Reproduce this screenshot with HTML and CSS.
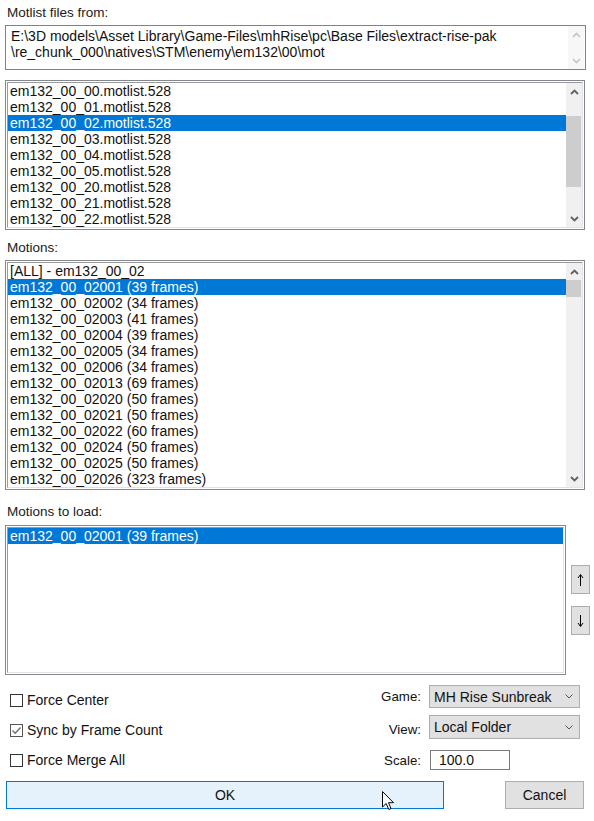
FILE: index.html
```html
<!DOCTYPE html>
<html>
<head>
<meta charset="utf-8">
<link rel="stylesheet" href="styles.css">
</head>
<body>
<div class="dialog">
  <div class="label lbl-first">Motlist files from:</div>
  <div class="pathbox">
    <div class="pathtext">E:\3D models\Asset Library\Game-Files\mhRise\pc\Base Files\extract-rise-pak<br>\re_chunk_000\natives\STM\enemy\em132\00\mot</div>
    <div class="vscroll vscroll-disabled">
      <div class="sarrow"><svg width="9" height="6" viewBox="0 0 9 6"><polyline points="1,5 4.5,1.5 8,5" fill="none" stroke="#c4c4c4" stroke-width="1.6"/></svg></div>
      <div class="strack"></div>
      <div class="sarrow"><svg width="9" height="6" viewBox="0 0 9 6"><polyline points="1,1 4.5,4.5 8,1" fill="none" stroke="#c4c4c4" stroke-width="1.6"/></svg></div>
    </div>
  </div>

  <div class="listbox list-files">
    <div class="listinner">
      <div class="rows">
        <div class="row">em132_00_00.motlist.528</div>
        <div class="row">em132_00_01.motlist.528</div>
        <div class="row sel">em132_00_02.motlist.528</div>
        <div class="row">em132_00_03.motlist.528</div>
        <div class="row">em132_00_04.motlist.528</div>
        <div class="row">em132_00_05.motlist.528</div>
        <div class="row">em132_00_20.motlist.528</div>
        <div class="row">em132_00_21.motlist.528</div>
        <div class="row">em132_00_22.motlist.528</div>
      </div>
      <div class="vscroll">
        <div class="sarrow"><svg width="9" height="6" viewBox="0 0 9 6"><polyline points="1,5 4.5,1.5 8,5" fill="none" stroke="#606060" stroke-width="1.8"/></svg></div>
        <div class="strack"><div class="thumb thumb-files"></div></div>
        <div class="sarrow"><svg width="9" height="6" viewBox="0 0 9 6"><polyline points="1,1 4.5,4.5 8,1" fill="none" stroke="#606060" stroke-width="1.8"/></svg></div>
      </div>
    </div>
  </div>

  <div class="label lbl-motions">Motions:</div>
  <div class="listbox list-motions">
    <div class="listinner">
      <div class="rows">
        <div class="row">[ALL] - em132_00_02</div>
        <div class="row sel">em132_00_02001 (39 frames)</div>
        <div class="row">em132_00_02002 (34 frames)</div>
        <div class="row">em132_00_02003 (41 frames)</div>
        <div class="row">em132_00_02004 (39 frames)</div>
        <div class="row">em132_00_02005 (34 frames)</div>
        <div class="row">em132_00_02006 (34 frames)</div>
        <div class="row">em132_00_02013 (69 frames)</div>
        <div class="row">em132_00_02020 (50 frames)</div>
        <div class="row">em132_00_02021 (50 frames)</div>
        <div class="row">em132_00_02022 (60 frames)</div>
        <div class="row">em132_00_02024 (50 frames)</div>
        <div class="row">em132_00_02025 (50 frames)</div>
        <div class="row">em132_00_02026 (323 frames)</div>
      </div>
      <div class="vscroll">
        <div class="sarrow"><svg width="9" height="6" viewBox="0 0 9 6"><polyline points="1,5 4.5,1.5 8,5" fill="none" stroke="#606060" stroke-width="1.8"/></svg></div>
        <div class="strack"><div class="thumb thumb-motions"></div></div>
        <div class="sarrow"><svg width="9" height="6" viewBox="0 0 9 6"><polyline points="1,1 4.5,4.5 8,1" fill="none" stroke="#606060" stroke-width="1.8"/></svg></div>
      </div>
    </div>
  </div>

  <div class="label lbl-load">Motions to load:</div>
  <div class="loadrow">
    <div class="listbox list-load">
      <div class="listinner">
        <div class="rows">
          <div class="row sel">em132_00_02001 (39 frames)</div>
        </div>
      </div>
    </div>
    <div class="movebtns">
      <div class="mbtn"><svg width="9" height="14" viewBox="0 0 9 14"><line x1="4.5" y1="2" x2="4.5" y2="13" stroke="#000" stroke-width="1"/><polyline points="2,5 4.5,1.5 7,5" fill="none" stroke="#000" stroke-width="1"/></svg></div>
      <div class="mbtn"><svg width="9" height="14" viewBox="0 0 9 14"><line x1="4.5" y1="1" x2="4.5" y2="12" stroke="#000" stroke-width="1"/><polyline points="2,9 4.5,12.5 7,9" fill="none" stroke="#000" stroke-width="1"/></svg></div>
    </div>
  </div>

  <div class="options">
    <div class="checks">
      <div class="check"><span class="cbox"></span><span>Force Center</span></div>
      <div class="check"><span class="cbox checked"><svg width="11" height="11" viewBox="0 0 11 11"><polyline points="1.5,5.5 4.2,8.2 9.5,2.5" fill="none" stroke="#6d6d6d" stroke-width="1.4"/></svg></span><span>Sync by Frame Count</span></div>
      <div class="check"><span class="cbox"></span><span>Force Merge All</span></div>
    </div>
    <div class="form">
      <div class="flabel">Game:</div>
      <div class="select">MH Rise Sunbreak<svg class="chev" width="8" height="5" viewBox="0 0 8 5"><polyline points="0.5,0.5 4,4 7.5,0.5" fill="none" stroke="#555" stroke-width="1"/></svg></div>
      <div class="flabel">View:</div>
      <div class="select sel-view">Local Folder<svg class="chev" width="8" height="5" viewBox="0 0 8 5"><polyline points="0.5,0.5 4,4 7.5,0.5" fill="none" stroke="#555" stroke-width="1"/></svg></div>
      <div class="flabel">Scale:</div>
      <div class="scalewrap"><div class="input">100.0</div></div>
    </div>
  </div>

  <div class="buttons">
    <div class="btn btn-ok">OK</div>
    <div class="btn btn-cancel">Cancel</div>
  </div>

  <svg class="cursor" width="13" height="20" viewBox="0 0 13 20"><path d="M0.5,0.5 L0.5,16 L4.2,12.5 L6.8,18.5 L9,17.5 L6.5,11.7 L11.5,11.7 Z" fill="#fff" stroke="#000" stroke-width="1"/></svg>
</div>
</body>
</html>
```

FILE: styles.css
```css
* { box-sizing: border-box; }
html, body { margin: 0; padding: 0; background: #fff; }
body {
  font-family: "Liberation Sans", Arial, sans-serif;
  font-size: 14px;
  color: #000;
  width: 594px;
  height: 821px;
  overflow: hidden;
}
.dialog {
  position: relative;
  width: 594px;
  padding: 5px 0 0 5px;
  display: flex;
  flex-direction: column;
  align-items: flex-start;
}
.label {
  height: 16px;
  line-height: 16px;
  padding-left: 2px;
  font-size: 13.5px;
  color: #1a1a1a;
}
.lbl-motions { margin-top: 10px; }
.lbl-load { margin-top: 14px; }

/* path textarea */
.pathbox {
  margin-top: 4px;
  width: 581px;
  height: 45px;
  border: 1px solid #828282;
  display: flex;
  background: #fff;
}
.pathtext {
  flex: 1;
  padding: 2px 0 0 5px;
  line-height: 16px;
  color: #111;
  white-space: nowrap;
  overflow: hidden;
}
.vscroll {
  width: 16px;
  flex-shrink: 0;
  background: #f0f0f0;
  display: flex;
  flex-direction: column;
}
.vscroll-disabled { background: #f7f7f7; margin-right: 1px; }
.sarrow {
  height: 17px;
  display: flex;
  align-items: center;
  justify-content: center;
}
.strack { flex: 1; position: relative; }
.thumb { background: #cdcdcd; margin: 0 1px 0 0; }
.thumb-files { margin-top: 16px; height: 71px; }
.thumb-motions { margin-top: 0; height: 17px; }

/* list boxes */
.listbox {
  border: 1px solid #828790;
  padding: 1px;
  background: #fff;
  flex-shrink: 0;
}
.listinner {
  height: 100%;
  display: flex;
  border-style: solid;
  border-width: 1px;
  border-color: #9a9a9a #e3e3e3 #e3e3e3 #9a9a9a;
  overflow: hidden;
}
.rows { flex: 1; overflow: hidden; }
.row {
  height: 16px;
  line-height: 16px;
  padding-left: 2px;
  white-space: nowrap;
  color: #111;
}
.row.sel { background: #0078d7; color: #fff; }
.list-files { margin-top: 10px; width: 580px; height: 150px; }
.list-motions { margin-top: 4px; width: 580px; height: 230px; }

/* motions to load */
.loadrow {
  margin-top: 5px;
  display: flex;
  align-items: center;
}
.list-load { width: 561px; height: 150px; }
.movebtns {
  margin-left: 5px;
  flex-shrink: 0;
  display: flex;
  flex-direction: column;
  gap: 12px;
}
.mbtn {
  width: 19px;
  height: 29px;
  background: #e1e1e1;
  border: 1px solid #adadad;
  display: flex;
  align-items: center;
  justify-content: center;
}

/* options */
.options {
  margin-top: 10px;
  width: 580px;
  display: flex;
  justify-content: space-between;
}
.checks { padding-left: 5px; display: flex; flex-direction: column; }
.check {
  height: 30px;
  display: flex;
  align-items: center;
  gap: 4px;
  color: #111;
}
.cbox {
  width: 13px;
  height: 13px;
  border: 1px solid #333;
  background: #fff;
  display: flex;
  align-items: center;
  justify-content: center;
}
.cbox.checked { border-color: #555; }
.form {
  margin-right: 5px;
  display: grid;
  grid-template-columns: auto 151px;
  column-gap: 8px;
  align-items: center;
  align-content: start;
}
.flabel { text-align: right; color: #111; font-size: 13.3px; }
.select {
  height: 23px;
  background: #e1e1e1;
  border: 1px solid #adadad;
  display: flex;
  align-items: center;
  justify-content: space-between;
  padding: 0 6px 0 4px;
  color: #111;
}
.sel-view { margin-top: 7px; margin-bottom: 11px; height: 24px; }
.scalewrap { padding-left: 1px; }
.input {
  width: 80px;
  height: 20px;
  border: 1px solid #7a7a7a;
  background: #fff;
  line-height: 18px;
  padding-left: 8px;
  color: #111;
}

/* buttons */
.buttons {
  margin-top: 6px;
  width: 580px;
  display: flex;
  justify-content: space-between;
  padding: 0 1px;
}
.btn {
  height: 28px;
  display: flex;
  align-items: center;
  justify-content: center;
  color: #111;
}
.btn-ok {
  width: 438px;
  background: #e5f1fb;
  border: 1px solid #0078d7;
}
.btn-cancel {
  width: 79px;
  background: #e1e1e1;
  border: 1px solid #adadad;
}
.cursor {
  position: absolute;
  left: 382px;
  top: 791px;
}
```
